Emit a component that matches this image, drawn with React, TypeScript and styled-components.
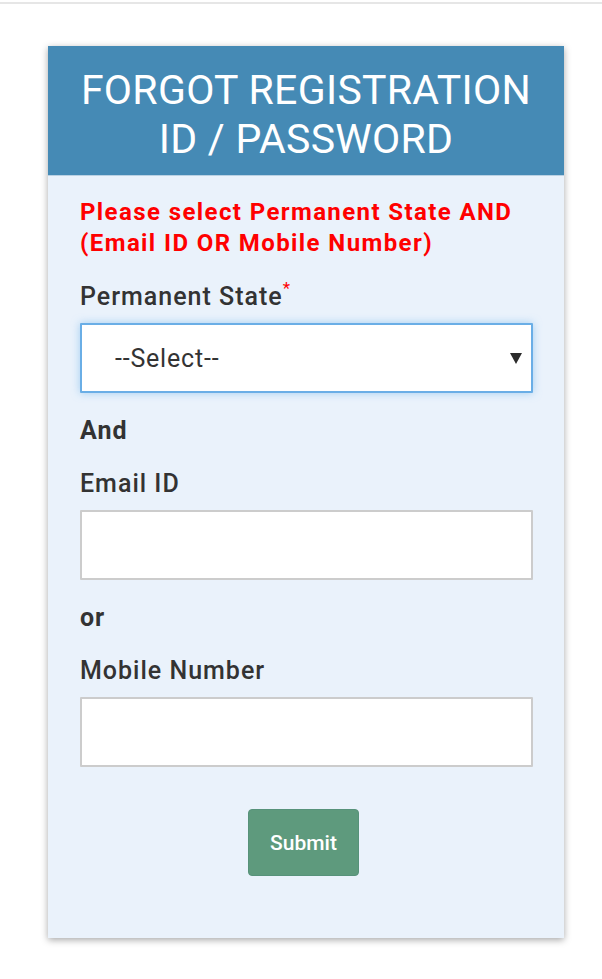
import styled, { createGlobalStyle } from 'styled-components';

const GlobalStyle = createGlobalStyle`
  html, body {
    margin: 0;
    padding: 0;
    background: #ffffff;
    font-family: Roboto, "Liberation Sans", Arial, sans-serif;
  }
  * {
    box-sizing: border-box;
  }
`;

function App() {
  return (
    <>
      <GlobalStyle />
      <TopRule />
      <Page>
        <Card>
          <CardHeader>
            <Title>Forgot Registration ID / Password</Title>
          </CardHeader>
          <CardBody>
            <Notice>
              Please select Permanent State AND (Email ID OR Mobile Number)
            </Notice>
            <Field>
              <Label>
                Permanent State<Required>*</Required>
              </Label>
              <SelectWrap>
                <Select defaultValue="">
                  <option value="">--Select--</option>
                </Select>
                <Caret width="12" height="11" viewBox="0 0 12 11">
                  <polygon points="0,0 12,0 6,11" fill="#2b2b2b" />
                </Caret>
              </SelectWrap>
            </Field>
            <Joiner>And</Joiner>
            <Field>
              <Label>Email ID</Label>
              <Input type="text" />
            </Field>
            <Joiner>or</Joiner>
            <Field>
              <Label>Mobile Number</Label>
              <Input type="text" />
            </Field>
            <Actions>
              <SubmitButton type="button">Submit</SubmitButton>
            </Actions>
          </CardBody>
        </Card>
      </Page>
    </>
  );
}

export default App;

const TopRule = styled.div`
  height: 2px;
  margin-top: 2px;
  background: #e6e6e6;
`;

const Page = styled.div`
  padding: 42px 38px 40px 48px;
`;

const Card = styled.div`
  width: 516px;
  background: #eaf2fb;
  box-shadow: 0 2px 7px rgba(0, 0, 0, 0.35);
`;

const CardHeader = styled.div`
  background: #458ab5;
  padding: 20px 20px 11px;
  border-bottom: 1px solid #b9d1e3;
`;

const Title = styled.h1`
  margin: 0;
  color: #ffffff;
  font-size: 41px;
  font-weight: 400;
  line-height: 49px;
  letter-spacing: 0.3px;
  text-align: center;
  text-transform: uppercase;
`;

const CardBody = styled.div`
  padding: 21px 31px 62px 32px;
  display: flex;
  flex-direction: column;
`;

const Notice = styled.p`
  margin: 0 0 23px;
  color: #ff0000;
  font-size: 24px;
  font-weight: 700;
  line-height: 31px;
  letter-spacing: 1.4px;
`;

const Field = styled.div`
  display: flex;
  flex-direction: column;
  gap: 11px;
  margin-bottom: 23px;
`;

const Label = styled.label`
  color: #333333;
  font-size: 25px;
  font-weight: 500;
  line-height: 30px;
  letter-spacing: 1px;
`;

const Required = styled.sup`
  color: #ff0000;
  font-size: 17px;
  font-weight: 400;
  line-height: 0;
  letter-spacing: 0;
  position: relative;
  top: -2px;
`;

const SelectWrap = styled.div`
  position: relative;
`;

const Select = styled.select`
  appearance: none;
  width: 100%;
  height: 70px;
  padding: 0 40px 0 33px;
  background: #ffffff;
  border: 2px solid #6aaee6;
  border-radius: 1px;
  box-shadow: 0 0 8px rgba(102, 175, 233, 0.55);
  color: #333333;
  font-family: inherit;
  font-size: 25px;
  letter-spacing: 0.8px;
  outline: none;
`;

const Caret = styled.svg`
  position: absolute;
  right: 11px;
  top: 30px;
  pointer-events: none;
`;

const Joiner = styled.div`
  margin-bottom: 23px;
  color: #333333;
  font-size: 25px;
  font-weight: 700;
  line-height: 30px;
  letter-spacing: 1px;
`;

const Input = styled.input`
  width: 100%;
  height: 70px;
  padding: 0 16px;
  background: #ffffff;
  border: 2px solid #cccccc;
  border-radius: 1px;
  font-family: inherit;
  font-size: 22px;
  outline: none;
`;

const Actions = styled.div`
  display: flex;
  justify-content: center;
  padding: 19px 6px 0 0;
`;

const SubmitButton = styled.button`
  width: 111px;
  height: 67px;
  background: #5e9a7d;
  border: 1px solid #57927a;
  border-radius: 4px;
  color: #ffffff;
  font-family: inherit;
  font-size: 21px;
  font-weight: 500;
  cursor: pointer;
`;
